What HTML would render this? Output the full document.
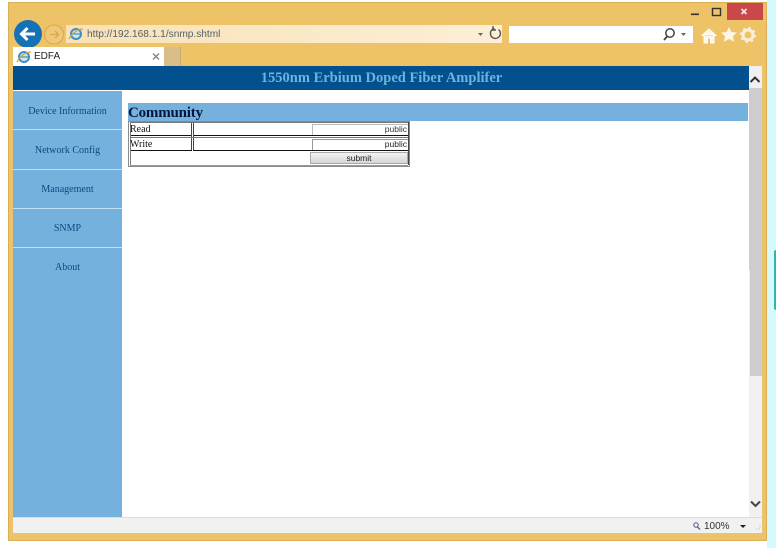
<!DOCTYPE html>
<html><head><meta charset="utf-8"><style>
html,body{margin:0;padding:0;width:776px;height:548px;overflow:hidden;background:#fff;font-family:"Liberation Sans",sans-serif}
div,span{position:absolute;white-space:nowrap;box-sizing:border-box}
.nav{left:13px;width:109px;height:39px;border-bottom:1px solid #bfe0f2;text-align:center;font:10px/1 "Liberation Serif",serif;color:#0b4a80;padding-top:15px}
.ln{background:#111}
</style></head><body>
<div style="left:767px;top:0;width:9px;height:548px;background:#d6f9fb"></div>
<div style="left:774px;top:250px;width:2px;height:60px;background:#2fb5b0;border-radius:2px 0 0 2px"></div>
<div style="left:8px;top:2px;width:759px;height:539px;background:linear-gradient(#eec266,#ecc36a);border:1px solid #d9ae55"></div>
<div style="left:727px;top:3px;width:36px;height:17px;background:#c9494a"></div>
<svg style="position:absolute;left:0;top:0" width="776" height="70">
<rect x="691" y="13.500" width="8" height="1.600" fill="#333"/>
<rect x="712.500" y="8.500" width="8" height="7" fill="none" stroke="#333" stroke-width="1.400"/>
<path d="M741.500 9l5 5M746.500 9l-5 5" stroke="#f6e8e8" stroke-width="1.600"/>
<circle cx="28" cy="34" r="14" fill="#1572b6"/>
<path d="M35 34H22M27.500 28l-6 6 6 6" fill="none" stroke="#fff" stroke-width="3"/>
<circle cx="54" cy="34.500" r="9.500" fill="#efc877" stroke="#d9a64e"/>
<path d="M59 34.500H50M55 31l3.500 3.500-3.500 3.500" fill="none" stroke="#d9a64e" stroke-width="1.300"/>
<defs><linearGradient id="a" x1="0" x2="1" y1="0" y2="0"><stop offset="0" stop-color="#f8e2b6"/><stop offset="1" stop-color="#fcefd6"/></linearGradient></defs>
<rect x="66" y="25" width="436" height="18" fill="url(#a)"/>
<rect x="509" y="26" width="184" height="17" fill="#fff"/>
<circle cx="76" cy="34" r="5" fill="#cfe6f3" stroke="#3f8fc4" stroke-width="2"/><path d="M72 34h8" stroke="#3f8fc4" stroke-width="1.200"/><path d="M69 39c3-6 9-10 14-10" fill="none" stroke="#d8a23c" stroke-width="1.300"/>
<path d="M478 33h5l-2.500 3z" fill="#666"/>
<path d="M498.500 29.500a5 5 0 1 1-4-1M493 26v4h3" fill="none" stroke="#555" stroke-width="1.400"/>
<circle cx="670" cy="33" r="4.200" fill="none" stroke="#444" stroke-width="1.500"/><path d="M667 36.500l-3 3.500" stroke="#444" stroke-width="1.800"/>
<path d="M681 33h5l-2.500 3z" fill="#666"/>
<path d="M701.500 36l7.500-7 7.500 7M704 35v8h3.500v-5h3v5h3.500v-8z" fill="#fdf6e6" stroke="#fff" stroke-width="1"/>
<path d="M729 27l2.400 5 5.600.6-4.100 3.700 1.200 5.500-5.100-2.800-5.100 2.800 1.200-5.500-4.100-3.700 5.600-.6z" fill="#fdf6e6"/>
<circle cx="748" cy="35" r="5" fill="none" stroke="#f8efd8" stroke-width="3"/>
<circle cx="748" cy="35" r="7" fill="none" stroke="#f8efd8" stroke-width="2" stroke-dasharray="2.500 3"/>
</svg>
<div style="left:87px;top:28px;font-size:10.150px;line-height:13px;color:#55606a">http://192.168.1.1/snmp.shtml</div>
<div style="left:13px;top:47px;width:151px;height:19px;background:#fff"></div>
<div style="left:164px;top:47px;width:17px;height:19px;background:#d9bf87;border-right:1px solid #c9ab6e"></div>
<svg style="position:absolute;left:0;top:0;z-index:1" width="170" height="70">
<circle cx="24" cy="57" r="5" fill="#cfe6f3" stroke="#3f8fc4" stroke-width="2"/><path d="M20 57h8" stroke="#3f8fc4" stroke-width="1.200"/><path d="M17 62c3-6 9-10 14-10" fill="none" stroke="#d8a23c" stroke-width="1.300"/>
<path d="M153 53.500l6 6M159 53.500l-6 6" stroke="#8a8a8a" stroke-width="1.500"/>
</svg>
<div style="left:34px;top:51px;font-size:10px;line-height:12px;color:#222;z-index:1">EDFA</div>
<div style="left:13px;top:66px;width:749px;height:451px;background:#fff"></div>
<div style="left:13px;top:66px;width:736px;height:24px;padding-left:1px;background:#03508e;text-align:center;font:bold 14.500px/25px 'Liberation Serif',serif;color:#6fb3dc">1550nm Erbium Doped Fiber Amplifer</div>
<div style="left:13px;top:91px;width:109px;height:426px;background:#74b2dd"></div>
<div class="nav" style="top:92px;height:38px;padding-top:15px">Device Information</div>
<div class="nav" style="top:131px;padding-top:15px">Network Config</div>
<div class="nav" style="top:170px;padding-top:15px">Management</div>
<div class="nav" style="top:209px;padding-top:15px">SNMP</div>
<div class="nav" style="top:248px;border:0;padding-top:15px">About</div>
<div style="left:128px;top:103px;width:620px;height:18px;background:#74b2dd"></div>
<div style="left:128px;top:104px;font:bold 15px/19px 'Liberation Serif',serif;letter-spacing:-.2px;color:#06153f">Community</div>
<div style="left:128px;top:121px;width:282px;height:46px;background:#fff;border:1px solid #8a8a8a"></div>
<div class="ln" style="left:130px;top:135px;width:62px;height:1px"></div>
<div class="ln" style="left:193px;top:135px;width:215px;height:1px"></div>
<div class="ln" style="left:130px;top:150px;width:62px;height:1px"></div>
<div class="ln" style="left:193px;top:150px;width:215px;height:1px"></div>
<div style="left:191px;top:122px;width:1px;height:28px;background:#444"></div>
<div style="left:193px;top:122px;width:1px;height:28px;background:#444"></div>
<div style="left:408px;top:122px;width:1px;height:43px;background:#444"></div>
<div style="left:130px;top:122px;width:278px;height:1px;background:#777"></div>
<div style="left:130px;top:137px;width:278px;height:1px;background:#777"></div>
<div style="left:130px;top:165px;width:278px;height:1px;background:#999"></div>
<div style="left:130px;top:122px;width:1px;height:43px;background:#777"></div>
<div style="left:130px;top:124px;font:10px/12px 'Liberation Serif',serif;color:#111">Read</div>
<div style="left:130px;top:139px;font:10px/12px 'Liberation Serif',serif;color:#111">Write</div>
<div style="left:312px;top:124px;width:96px;height:11px;border:1px solid #bbb;border-right:0;border-bottom:0;text-align:right;font-size:8.500px;line-height:9px;color:#333;padding-right:1px">public</div>
<div style="left:312px;top:139px;width:96px;height:11px;border:1px solid #999;border-right:0;border-bottom:0;text-align:right;font-size:8.500px;line-height:9px;color:#222;padding-right:1px">public</div>
<div style="left:310px;top:152px;width:98px;height:12px;background:linear-gradient(#f2f2f2,#d5d5d5);border:1px solid #aaa;text-align:center;font-size:8.500px;line-height:10px;color:#222">submit</div>
<div style="left:749px;top:66px;width:13px;height:451px;background:#f0f0f0"></div>
<div style="left:749px;top:88px;width:13px;height:182px;background:#cdcdcd"></div>
<div style="left:750px;top:270px;width:12px;height:106px;background:#cdcdcd"></div>
<div style="left:13px;top:517px;width:749px;height:16px;background:#f1f1f1;border-top:1px solid #dcdcdc"></div>
<svg style="position:absolute;left:0;top:0;z-index:2" width="776" height="548">
<path d="M750.500 82l4.500-4.500 4.500 4.500" fill="none" stroke="#333" stroke-width="2"/>
<path d="M751 501.500l4.500 4.500 4.500-4.500" fill="none" stroke="#444" stroke-width="2"/>
<circle cx="696" cy="525" r="2.200" fill="none" stroke="#557" stroke-width="1"/><path d="M697.500 527l2.500 2.500" stroke="#668" stroke-width="1.400"/>
<path d="M740 525h6l-3 3z" fill="#222"/>
<path d="M760 524v5h-5" fill="none" stroke="#bbb" stroke-dasharray="1 1.500"/>
</svg>
<div style="left:704px;top:521px;font-size:10px;line-height:12px;color:#333;z-index:2">100%</div>
</body></html>
